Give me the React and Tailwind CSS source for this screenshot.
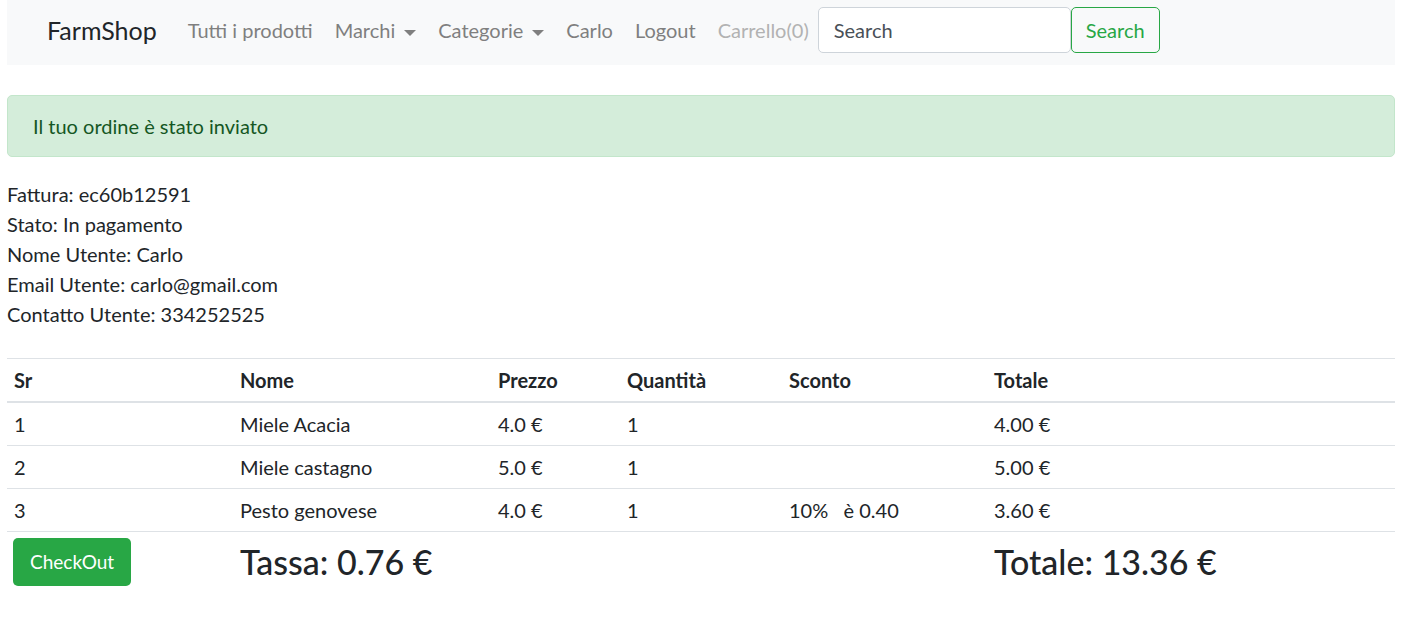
import React from 'react';

const Caret = () => (
  <span className="ml-[9px] inline-block h-0 w-0 border-x-[6px] border-t-[6px] border-x-transparent border-t-current align-middle" />
);

const rows = [
  { sr: 1, nome: 'Miele Acacia', prezzo: '4.0 €', qty: 1, sconto: '', totale: '4.00 €' },
  { sr: 2, nome: 'Miele castagno', prezzo: '5.0 €', qty: 1, sconto: '', totale: '5.00 €' },
  { sr: 3, nome: 'Pesto genovese', prezzo: '4.0 €', qty: 1, sconto: '10%\u00a0\u00a0\u00a0è 0.40', totale: '3.60 €' },
];

const Navbar = () => (
  <nav className="flex h-[65px] items-start bg-[#f8f9fa] pl-[40px] pt-[7px]">
    <span className="mr-[20px] text-[25px] leading-[46px] text-[#212529]">FarmShop</span>
    <div className="flex items-center text-[20px] leading-[46px] text-[#7f7f7f]">
      <span className="px-[11px]">Tutti i prodotti</span>
      <span className="px-[11px]">Marchi<Caret /></span>
      <span className="px-[11px]">Categorie<Caret /></span>
      <span className="px-[11px]">Carlo</span>
      <span className="px-[11px]">Logout</span>
      <span className="pl-[11px] pr-[9px] text-[#b2b2b2]">Carrello(0)</span>
    </div>
    <div className="flex items-center">
      <input
        placeholder="Search"
        className="h-[46px] w-[253px] rounded-[5px] border border-[#ced4da] bg-white px-[15px] text-[20px] text-[#495057] placeholder:text-[#495057] outline-none"
      />
      <button className="h-[46px] rounded-[5px] border border-[#28a745] px-[14px] text-[20px] text-[#28a745]">
        Search
      </button>
    </div>
  </nav>
);

export default function App() {
  return (
    <div className="min-h-screen bg-white pl-[7px] pr-[30px] font-['Segoe_UI','Lato',sans-serif] text-[#212529]">
      <Navbar />

      <div className="mt-[30px] rounded-[5px] border border-[#c3e6cb] bg-[#d4edda] px-[25px] py-[15px] text-[20px] leading-[30px] text-[#155724]">
        Il tuo ordine è stato inviato
      </div>

      <div className="mt-[22px] text-[20px] leading-[30px]">
        <p>Fattura: ec60b12591</p>
        <p>Stato: In pagamento</p>
        <p>Nome Utente: Carlo</p>
        <p>Email Utente: carlo@gmail.com</p>
        <p>Contatto Utente: 334252525</p>
      </div>

      <table className="mt-[29px] w-full border-collapse text-[20px] leading-[30px]">
        <thead>
          <tr className="border-t border-b-2 border-t-[#dee2e6] border-b-[#dee2e6] text-left">
            <th className="w-[226px] px-[7px] py-[6px] font-bold">Sr</th>
            <th className="w-[258px] px-[7px] py-[6px] font-bold">Nome</th>
            <th className="w-[129px] px-[7px] py-[6px] font-bold">Prezzo</th>
            <th className="w-[162px] px-[7px] py-[6px] font-bold">Quantità</th>
            <th className="w-[205px] px-[7px] py-[6px] font-bold">Sconto</th>
            <th className="px-[7px] py-[6px] font-bold">Totale</th>
          </tr>
        </thead>
        <tbody>
          {rows.map((r) => (
            <tr key={r.sr} className="border-b border-[#dee2e6]">
              <td className="px-[7px] py-[6px]">{r.sr}</td>
              <td className="px-[7px] py-[6px]">{r.nome}</td>
              <td className="px-[7px] py-[6px]">{r.prezzo}</td>
              <td className="px-[7px] py-[6px]">{r.qty}</td>
              <td className="px-[7px] py-[6px]">{r.sconto}</td>
              <td className="px-[7px] py-[6px]">{r.totale}</td>
            </tr>
          ))}
          <tr>
            <td className="px-[6px] py-[6px] align-top">
              <button className="h-[48px] rounded-[5px] bg-[#28a745] px-[17px] text-[19px] text-white">CheckOut</button>
            </td>
            <td colSpan={4} className="px-[7px] py-[6px] align-top text-[34px] font-medium leading-[48px]">
              Tassa: 0.76 €
            </td>
            <td className="px-[7px] py-[6px] align-top text-[34px] font-medium leading-[48px]">
              Totale: 13.36 €
            </td>
          </tr>
        </tbody>
      </table>
    </div>
  );
}
